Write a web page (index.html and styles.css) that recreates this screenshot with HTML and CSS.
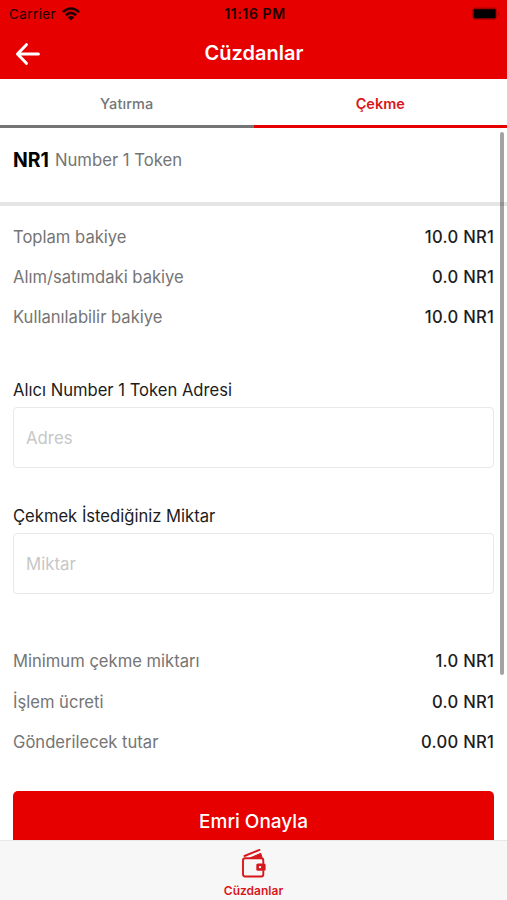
FILE: index.html
```html
<!DOCTYPE html>
<html lang="tr">
<head>
<meta charset="utf-8">
<title>Cüzdanlar</title>
<link rel="stylesheet" href="styles.css">
</head>
<body>
<div class="screen">
  <header class="header">
    <div class="status">
      <div class="carrier"><span class="carrier-name">Carrier</span>
        <svg class="wifi" width="18" height="14" viewBox="0 0 18 14" fill="none" stroke="#210000" stroke-width="2.500"><path d="M.9 5.200Q9-2.200 17.100 5.200M3.900 8.200Q9 3.600 14.100 8.200"/><path d="M9 13.500L5.700 10.300Q9 7.600 12.300 10.300Z" fill="#210000" stroke="none"/></svg>
      </div>
      <div class="clock">11:16 PM</div>
      <svg class="battery" width="29" height="14" viewBox="0 0 29 14"><rect x=".3" y=".5" width="24.500" height="12.300" rx="3" fill="#a90000"/><rect x="1.800" y="2.200" width="21.800" height="9" rx="1" fill="#000"/><path d="M26 5q2 2 0 4z" fill="#a90000"/></svg>
    </div>
    <div class="nav">
      <svg class="back" width="26" height="24" viewBox="0 0 26 24" fill="none" stroke="#fff" stroke-width="3" stroke-linecap="round" stroke-linejoin="round"><path d="M11.400 2.700L2.500 12l8.900 9.300M3 12h20.400"/></svg>
      <h1 class="title">Cüzdanlar</h1>
    </div>
  </header>
  <nav class="tabs">
    <div class="tab">Yatırma</div>
    <div class="tab active">Çekme</div>
  </nav>
  <main class="content">
    <section class="token"><b class="symbol">NR1</b><span class="name">Number 1 Token</span></section>
    <section class="rows">
      <div class="row"><span>Toplam bakiye</span><span class="value">10.0 NR1</span></div>
      <div class="row"><span>Alım/satımdaki bakiye</span><span class="value">0.0 NR1</span></div>
      <div class="row"><span>Kullanılabilir bakiye</span><span class="value">10.0 NR1</span></div>
    </section>
    <section class="fields">
      <label class="field"><span class="label">Alıcı Number 1 Token Adresi</span><input class="input" type="text" placeholder="Adres"></label>
      <label class="field"><span class="label">Çekmek İstediğiniz Miktar</span><input class="input" type="text" placeholder="Miktar"></label>
    </section>
    <section class="rows fees">
      <div class="row"><span>Minimum çekme miktarı</span><span class="value">1.0 NR1</span></div>
      <div class="row"><span>İşlem ücreti</span><span class="value">0.0 NR1</span></div>
      <div class="row"><span>Gönderilecek tutar</span><span class="value">0.00 NR1</span></div>
    </section>
    <button class="submit">Emri Onayla</button>
    <div class="scrollbar"></div>
  </main>
  <footer class="tabbar">
    <svg class="wallet" width="26" height="30" viewBox="0 0 26 30" fill="none" stroke="#d8171d" stroke-width="1.900" stroke-linejoin="round" stroke-linecap="round"><path d="M22.300 15.200V12.500q0-2.300-2.200-2.300H4.200q-2.200 0-2.200 2.300v13.500q0 2.500 2.200 2.500h16q2.100 0 2.100-2.300v-3"/><path d="M3.500 8L18.500 1.900"/><path d="M9.500 9.800L19.800 5.300l1.300 4.500z" fill="#d8171d" stroke-width="1"/><rect x="15.300" y="15.400" width="9.300" height="7.400" rx="1.500" fill="#d8171d" stroke="none"/><circle cx="19" cy="19.100" r="1.200" fill="#fff" stroke="none"/></svg>
    <span class="tabbar-label">Cüzdanlar</span>
  </footer>
</div>
</body>
</html>
```
FILE: styles.css
```css
* { box-sizing: border-box; }
body {
  margin: 0;
  background: #fff;
  font-family: Inter, "Liberation Sans", sans-serif;
}
.screen {
  width: 507px;
  height: 900px;
  display: flex;
  flex-direction: column;
  overflow: hidden;
}
.header { height: 79px; flex: none; background: #e60000; }
.status {
  height: 27px;
  padding: 0 6px 0 9px;
  display: grid;
  grid-template-columns: 1fr auto 1fr;
  align-items: center;
  color: #210000;
  font-size: 13.5px;
}
.carrier { display: flex; align-items: center; gap: 6px; }
.carrier-name { letter-spacing: .4px; }
.clock { font-weight: 600; font-size: 14px; letter-spacing: .6px; }
.battery { justify-self: end; }
.nav {
  height: 52px;
  padding: 0 14px 0 15px;
  display: grid;
  grid-template-columns: 26px 1fr 26px;
  align-items: center;
}
.back { margin-top: 2px; }
.title {
  margin: 0;
  color: #fff;
  font-size: 20px;
  font-weight: 600;
  text-align: center;
  line-height: 50px;
}
.tabs { height: 49px; flex: none; display: flex; }
.tab {
  flex: 1;
  border-bottom: 3px solid #757575;
  color: #757575;
  font-size: 14.5px;
  font-weight: 500;
  letter-spacing: .1px;
  line-height: 49px;
  text-align: center;
}
.tab.active { border-color: #e60000; color: #d8171d; font-weight: 600; letter-spacing: 0; }
.content { position: relative; flex: 1; min-height: 0; overflow: hidden; }
.token {
  height: 78px;
  padding: 21px 13px 0;
  border-bottom: 4px solid #e5e5e5;
  display: flex;
  gap: 6px;
  line-height: 22px;
  font-size: 16.7px;
  color: #757575;
}
.symbol { color: #000; font-size: 19.4px; font-weight: 700; }
.rows { padding: 10.6px 13px 0; }
.row {
  height: 40.3px;
  display: flex;
  justify-content: space-between;
  align-items: center;
  color: #757575;
  font-size: 16.6px;
}
.value { color: #1c1c1c; font-weight: 500; letter-spacing: .3px; margin-right: -.3px; }
.fields {
  padding: 40.7px 13px 0;
  display: flex;
  flex-direction: column;
  gap: 36px;
}
.field { display: flex; flex-direction: column; gap: 3.7px; }
.label { line-height: 25px; color: #1c1c1c; font-size: 16.6px; }
.input {
  height: 61px;
  width: 100%;
  padding: 1px 12px 0;
  border: 1.5px solid #e8e8e8;
  border-radius: 4px;
  background: #fff;
  font: 16.8px Inter, sans-serif;
}
.input::placeholder { color: #c7c7c7; }
.fees { padding-top: 47.8px; }
.submit {
  display: block;
  width: 481px;
  height: 61px;
  margin: 29px auto 0;
  border: 0;
  border-radius: 5px;
  background: #e60000;
  color: #fff;
  font: 500 19px/60px Inter, sans-serif;
}
.scrollbar {
  position: absolute;
  top: 4px;
  right: 3px;
  width: 4px;
  height: 543px;
  border-radius: 2px;
  background: rgba(0, 0, 0, .36);
}
.tabbar {
  height: 60px;
  flex: none;
  border-top: 1px solid #e7e7e7;
  background: #f7f7f7;
  display: flex;
  flex-direction: column;
  align-items: center;
  padding-top: 7px;
}
.tabbar-label {
  margin-top: 5px;
  color: #d8171d;
  font-size: 12px;
  font-weight: 600;
  line-height: 16px;
}
```
